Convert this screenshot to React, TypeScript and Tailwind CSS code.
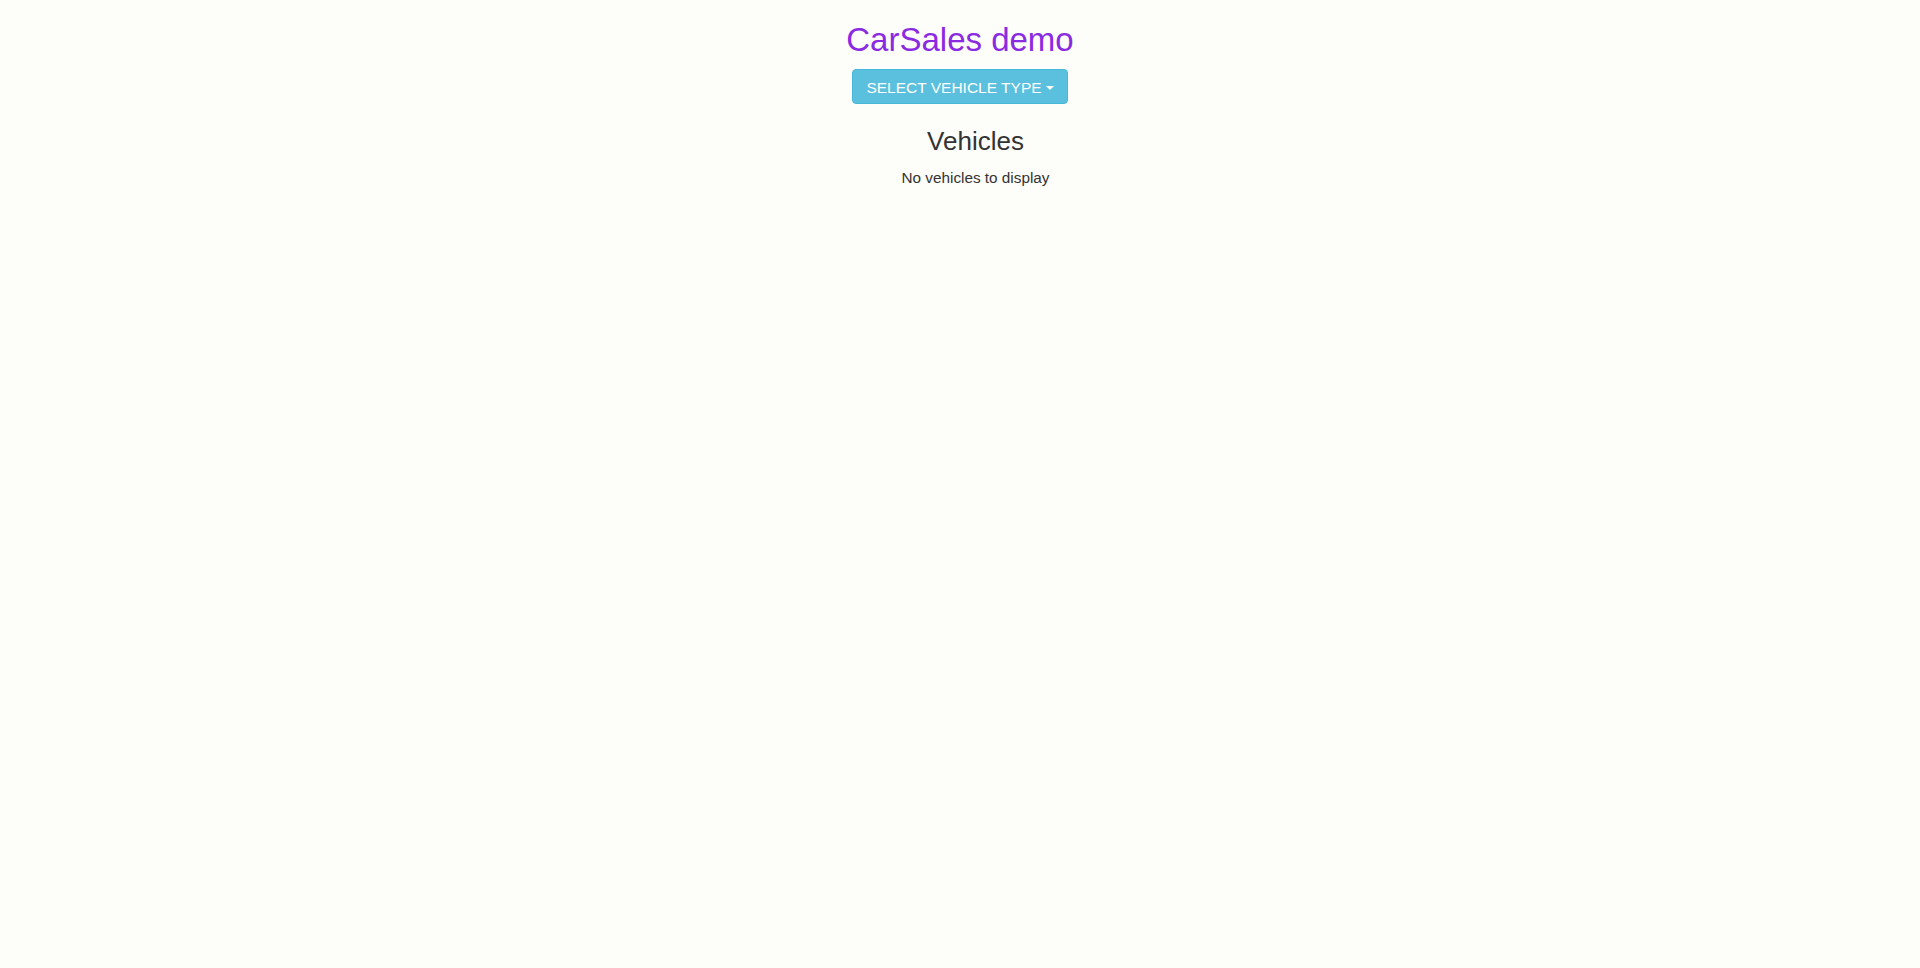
import { useState } from "react"

const vehicleTypes = ["Car", "Boat", "Bike"]

export default function App() {
  const [open, setOpen] = useState(false)
  const vehicles: string[] = []

  return (
    <div className="min-h-[968px] w-full bg-[#fdfdfa] font-['Liberation_Sans',Arial,sans-serif] text-[15px] text-[#333]">
      <div className="flex flex-col items-center pt-[20px]">
        <h1 className="text-[33px] leading-[40px] text-[#8a2be2]">
          CarSales demo
        </h1>

        <div className="relative mt-[9px]">
          <button
            type="button"
            className="flex h-[35px] w-[216px] items-center justify-center gap-[4px] rounded-[4px] border border-[#46b8da] bg-[#5bc0de] pt-[2px] text-[15.5px] text-white uppercase"
            onClick={() => setOpen(!open)}
          >
            Select vehicle type
            <span className="mt-[1px] h-0 w-0 border-x-[4px] border-t-[4px] border-x-transparent border-t-white" />
          </button>
          {open && (
            <ul className="absolute left-0 top-[37px] z-10 w-[160px] rounded-[4px] border border-black/15 bg-white py-[5px] shadow-md">
              {vehicleTypes.map(type => (
                <li key={type} className="px-[20px] py-[3px] hover:bg-[#f5f5f5]">
                  {type}
                </li>
              ))}
            </ul>
          )}
        </div>

        <section className="flex flex-col items-center pl-[31px]">
          <h3 className="mt-[21px] text-[26px] leading-[33px]">Vehicles</h3>
          {vehicles.length === 0 ? (
            <p className="mt-[9px] text-[15.3px] leading-[21px]">
              No vehicles to display
            </p>
          ) : (
            vehicles.map(v => <p key={v}>{v}</p>)
          )}
        </section>
      </div>
    </div>
  )
}
